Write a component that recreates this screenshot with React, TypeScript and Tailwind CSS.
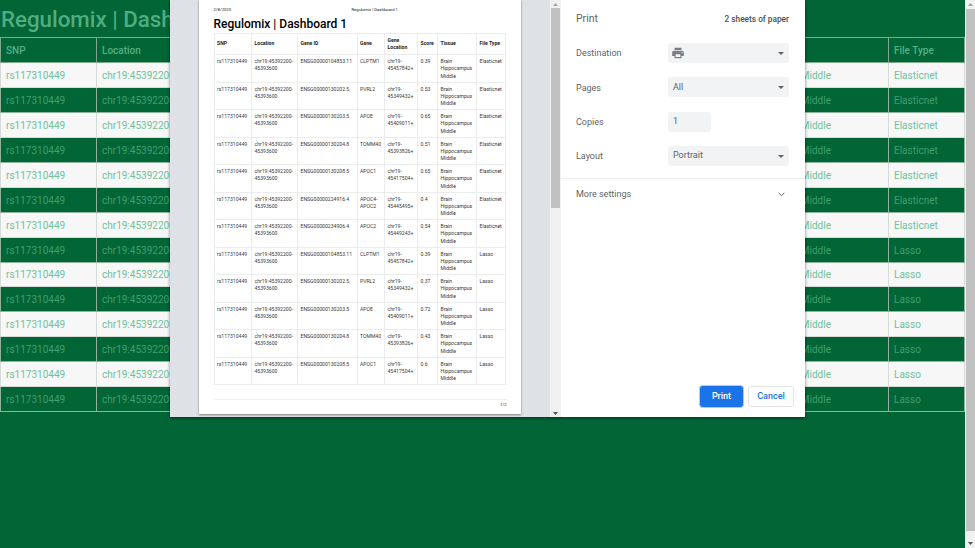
import React from "react";

const bgRows = Array.from({ length: 14 }, (_, i) => ({
  light: i % 2 === 0,
  type: i < 7 ? "Elasticnet" : "Lasso",
}));

const genes = [
  ["ENSG00000104853.11", "CLPTM1", "chr19-\n45457842+", "0.39", "Elasticnet"],
  ["ENSG00000130202.5", "PVRL2", "chr19-\n45349432+", "0.53", "Elasticnet"],
  ["ENSG00000130203.5", "APOE", "chr19-\n45409011+", "0.65", "Elasticnet"],
  ["ENSG00000130204.8", "TOMM40", "chr19-\n45393826+", "0.51", "Elasticnet"],
  ["ENSG00000130208.5", "APOC1", "chr19-\n45417504+", "0.65", "Elasticnet"],
  ["ENSG00000224916.4", "APOC4-\nAPOC2", "chr19-\n45445495+", "0.4", "Elasticnet"],
  ["ENSG00000234906.4", "APOC2", "chr19-\n45449243+", "0.54", "Elasticnet"],
  ["ENSG00000104853.11", "CLPTM1", "chr19-\n45457842+", "0.39", "Lasso"],
  ["ENSG00000130202.5", "PVRL2", "chr19-\n45349432+", "0.37", "Lasso"],
  ["ENSG00000130203.5", "APOE", "chr19-\n45409011+", "0.72", "Lasso"],
  ["ENSG00000130204.8", "TOMM40", "chr19-\n45393826+", "0.43", "Lasso"],
  ["ENSG00000130208.5", "APOC1", "chr19-\n45417504+", "0.6", "Lasso"],
];

function ScrollArrow({ up }: { up?: boolean }) {
  return (
    <svg width="7" height="5" viewBox="0 0 7 5" className="mx-auto">
      <path d={up ? "M3.5 1L6 4H1z" : "M3.5 4L1 1h5z"} fill={up ? "#a3a3a3" : "#505050"} />
    </svg>
  );
}

function Row({ label, children }: { label: string; children: React.ReactNode }) {
  return (
    <div className="flex h-[20px] items-center">
      <div className="w-[92px] translate-y-[0.5px] text-[9px] text-[#5f6368]">{label}</div>
      {children}
    </div>
  );
}

function Select({ children }: { children?: React.ReactNode }) {
  return (
    <div className="relative flex h-[20px] w-[121px] items-center rounded-[3px] bg-[#f1f3f4] pl-[5px] text-[9px] text-[#5f6368]">
      {children}
      <svg width="6" height="3" viewBox="0 0 6 3" className="absolute right-[5px] top-[9px]">
        <path d="M0 0h6L3 3z" fill="#5f6368" />
      </svg>
    </div>
  );
}

export default function App() {
  const cell = "border pl-[5px]";
  return (
    <div
      className="relative flex h-[548px] w-[975px] overflow-hidden bg-[#016535]"
      style={{ fontFamily: "Roboto, sans-serif" }}
    >
      <main className="w-[965px] shrink-0">
        <h1 className="h-[37px] pl-[1px] text-[22.3px] font-medium leading-[38px] text-[#4fae80]">
          Regulomix | Dashboard 1
        </h1>
        <table className="w-[964px] table-fixed border-collapse text-left text-[10px]">
          <colgroup>
            <col className="w-[96px]" />
            <col className="w-[130px]" />
            <col className="w-[130px]" />
            <col className="w-[80px]" />
            <col className="w-[100px]" />
            <col className="w-[60px]" />
            <col className="w-[292px]" />
            <col className="w-[76px]" />
          </colgroup>
          <thead>
            <tr className="h-[25px] text-[#55b086]">
              {["SNP", "Location", "Gene ID", "Gene", "Gene Location", "Score", "Tissue", "File Type"].map((h) => (
                <th key={h} className="border border-[#7fa98f] pl-[5px] font-medium">
                  {h}
                </th>
              ))}
            </tr>
          </thead>
          <tbody>
            {bgRows.map((r, i) => {
              const c = r.light ? `${cell} border-[#d5dcd7]` : `${cell} border-[#8fb39c]`;
              const h = i === 8 ? "h-[24px]" : "h-[25px]";
              return (
                <tr
                  key={i}
                  className={`${h} ${r.light ? "bg-[#f7f7f7] text-[#6fc19b]" : "bg-[#016535] text-[#3f9f70]"}`}
                >
                  <td className={c}>rs117310449</td>
                  <td className={`${c} overflow-hidden whitespace-nowrap`}>chr19:45392200-45393600</td>
                  <td className={c}>ENSG00000104853.11</td>
                  <td className={c}>CLPTM1</td>
                  <td className={c}>chr19-45457842+</td>
                  <td className={c}>0.39</td>
                  <td className={`${c} whitespace-nowrap`}>
                    <span className="block w-[290px] pr-[61px] text-right">Brain Hippocampus Middle</span>
                  </td>
                  <td className={c}>{r.type}</td>
                </tr>
              );
            })}
          </tbody>
        </table>
      </main>

      {/* browser scrollbar */}
      <aside className="flex w-[10px] shrink-0 flex-col bg-[#f1f1f1]">
        <div className="flex h-[9px] items-center"><ScrollArrow up /></div>
        <div className="ml-[1px] h-[522px] bg-[#c1c1c1]" />
        <div className="mt-auto flex h-[9px] items-center"><ScrollArrow /></div>
      </aside>

      {/* print dialog */}
      <div className="absolute left-[170px] top-0 flex h-[417px] w-[635px] bg-white shadow-[0_1px_3px_rgba(0,0,0,0.5)]">
        <div className="flex w-[391px] shrink-0 bg-[#dee1e6]">
          <div className="ml-[29px] flex h-[414px] w-[322px] flex-col bg-white px-[14.5px] shadow-[0_1px_2px_rgba(0,0,0,0.45)]">
            <div className="relative h-[16px] shrink-0 pt-[7px] text-[4.2px] leading-[5px] text-[#222]">
              <span>2/8/2020</span>
              <span className="absolute left-[138px] top-[7px]">Regulomix | Dashboard 1</span>
            </div>
            <h2 className="h-[16px] shrink-0 text-[12px] font-medium leading-[16px] text-black">
              Regulomix | Dashboard 1
            </h2>
            <table className="mt-[1px] w-[291px] shrink-0 table-fixed border-collapse text-left text-[5.1px] leading-[7.4px] text-[#3a3a3a]">
              <colgroup>
                <col className="w-[37.5px]" />
                <col className="w-[46px]" />
                <col className="w-[59.5px]" />
                <col className="w-[27.5px]" />
                <col className="w-[33px]" />
                <col className="w-[20px]" />
                <col className="w-[39px]" />
                <col className="w-[28.5px]" />
              </colgroup>
              <thead>
                <tr className="h-[21px]">
                  {["SNP", "Location", "Gene ID", "Gene", "Gene Location", "Score", "Tissue", "File Type"].map((h) => (
                    <th key={h} className="border border-[#ececec] pl-[2.5px] font-bold text-[#222]">
                      {h}
                    </th>
                  ))}
                </tr>
              </thead>
              <tbody>
                {genes.map((g, i) => (
                  <tr key={i} className="h-[27.5px] align-top">
                    <td className="border border-[#ececec] pl-[2.5px] pt-[3px]">rs117310449</td>
                    <td className="border border-[#ececec] pl-[2.5px] pt-[3px]">chr19:45392200-<br />45393600</td>
                    <td className="border border-[#ececec] pl-[2.5px] pt-[3px]">{g[0]}</td>
                    <td className="whitespace-pre-line border border-[#ececec] pl-[2.5px] pt-[3px]">{g[1]}</td>
                    <td className="whitespace-pre-line border border-[#ececec] pl-[2.5px] pt-[3px]">{g[2]}</td>
                    <td className="border border-[#ececec] pl-[2.5px] pt-[3px]">{g[3]}</td>
                    <td className="border border-[#ececec] pl-[2.5px] pt-[3px]">Brain<br />Hippocampus<br />Middle</td>
                    <td className="border border-[#ececec] pl-[2.5px] pt-[3px]">{g[4]}</td>
                  </tr>
                ))}
              </tbody>
            </table>
            <div className="mt-[14px] border-t border-[#eeeeee] pt-[2px] text-right text-[4.2px] leading-[5px] text-[#222]">1/2</div>
          </div>
          <div className="ml-auto flex h-full w-[11px] flex-col bg-[#f1f1f1]">
            <div className="flex h-[8px] items-center"><ScrollArrow up /></div>
            <div className="mx-auto h-[200px] w-[9px] bg-[#c1c1c1]" />
            <div className="mt-auto flex h-[8px] items-center"><ScrollArrow /></div>
          </div>
        </div>

        <div className="flex min-w-0 flex-1 flex-col">
          <div className="flex h-[37px] items-center justify-between pl-[15px] pr-[16px] pt-[1px]">
            <span className="text-[10.5px] text-[#5f6368]">Print</span>
            <span className="text-[8.3px] font-medium text-[#4d5156]">2 sheets of paper</span>
          </div>
          <div className="flex flex-col gap-[14.3px] pl-[15px] pt-[6px]">
            <Row label="Destination">
              <Select>
                <svg width="14" height="14" viewBox="0 0 24 24" className="-ml-[2px]">
                  <path
                    fill="#7b7f84"
                    d="M19 8H5c-1.66 0-3 1.34-3 3v6h4v4h12v-4h4v-6c0-1.66-1.34-3-3-3zm-3 11H8v-5h8v5zm3-7c-.55 0-1-.45-1-1s.45-1 1-1 1 .45 1 1-.45 1-1 1zm-1-9H6v4h12V3z"
                  />
                </svg>
              </Select>
            </Row>
            <Row label="Pages">
              <Select>All</Select>
            </Row>
            <Row label="Copies">
              <div className="flex h-[20px] w-[43px] items-center rounded-[3px] bg-[#f1f3f4] pl-[5px] text-[9px] text-[#5f6368]">1</div>
            </Row>
            <Row label="Layout">
              <Select>Portrait</Select>
            </Row>
          </div>
          <div className="mt-[12px] flex h-[32px] items-center justify-between border-t border-[#eeeeee] pl-[15px] pr-[20px]">
            <span className="text-[9px] text-[#5f6368]">More settings</span>
            <svg width="7" height="5" viewBox="0 0 7 5">
              <path d="M.6.8l2.9 2.9L6.4.8" fill="none" stroke="#5f6368" strokeWidth="1" />
            </svg>
          </div>
          <div className="mb-[10px] mt-auto flex justify-end gap-[5px] pr-[11px]">
            <button className="h-[21px] w-[43px] rounded-[3px] bg-[#1a73e8] text-[9px] font-medium text-white ring-1 ring-[#a8c7fa]">Print</button>
            <button className="h-[21px] w-[46px] rounded-[3px] border border-[#e3e5e8] bg-white text-[9px] font-medium text-[#1a73e8]">Cancel</button>
          </div>
        </div>
      </div>
    </div>
  );
}
